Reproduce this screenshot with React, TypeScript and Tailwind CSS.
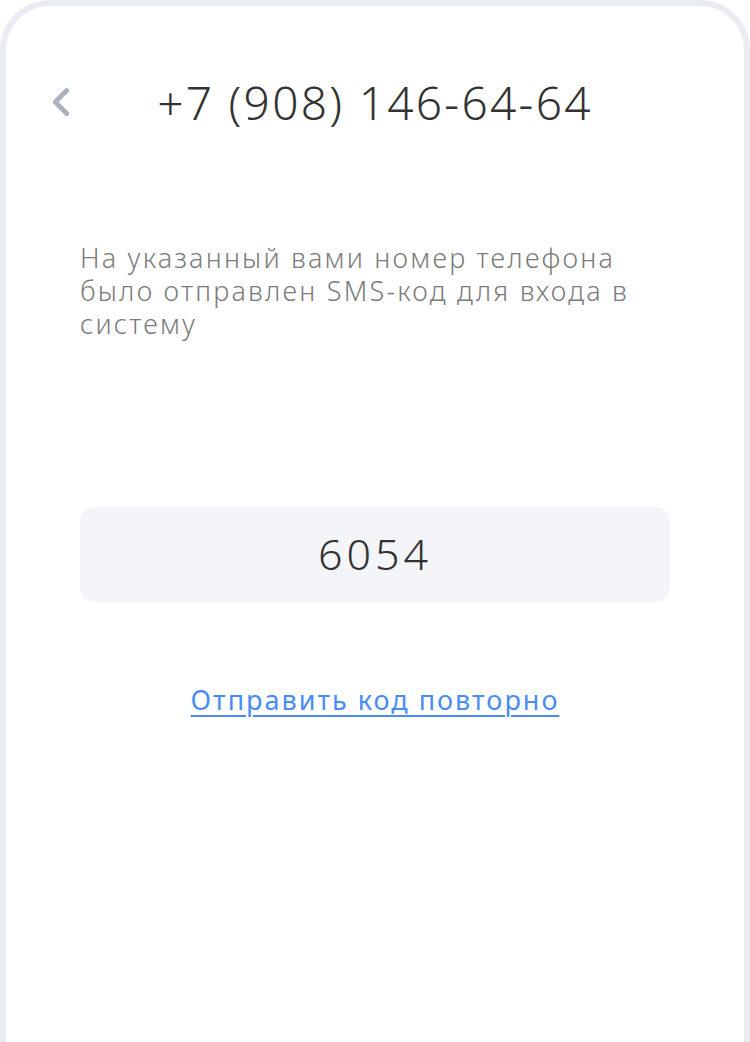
import { ChevronLeft } from "lucide-react";

export default function App() {
  return (
    <div className="w-[750px] h-[1042px] bg-white overflow-hidden font-['Noto_Sans',sans-serif]">
      <div className="h-[1100px] border-[6px] border-[#e9edf2] rounded-t-[50px] bg-white flex flex-col">
        <div className="relative flex items-center justify-center h-[60px] mt-[66px]">
          <ChevronLeft
            className="absolute left-[32px] top-[7px] text-[#aab2bf]"
            size={46}
            strokeWidth={2.5}
          />
          <div className="text-[46px] font-light text-[#333] tracking-[2.3px]">
            +7 (908) 146-64-64
          </div>
        </div>

        <p className="mt-[109px] ml-[74px] mr-[90px] text-[27px] leading-[33px] font-light text-[#7b7b7b] tracking-[2.2px]">
          На указанный вами номер телефона было отправлен SMS-код для входа в
          систему
        </p>

        <div className="mt-[167px] mx-[74px] h-[95px] rounded-[14px] bg-[#f4f5f9] flex items-center justify-center text-[43px] font-light text-[#333] tracking-[4px]">
          6054
        </div>

        <a
          href="#"
          className="mt-[78px] self-center text-[27px] text-[#4a8cf7] tracking-[2px] underline underline-offset-[5px] decoration-[2px]"
        >
          Отправить код повторно
        </a>
      </div>
    </div>
  );
}
